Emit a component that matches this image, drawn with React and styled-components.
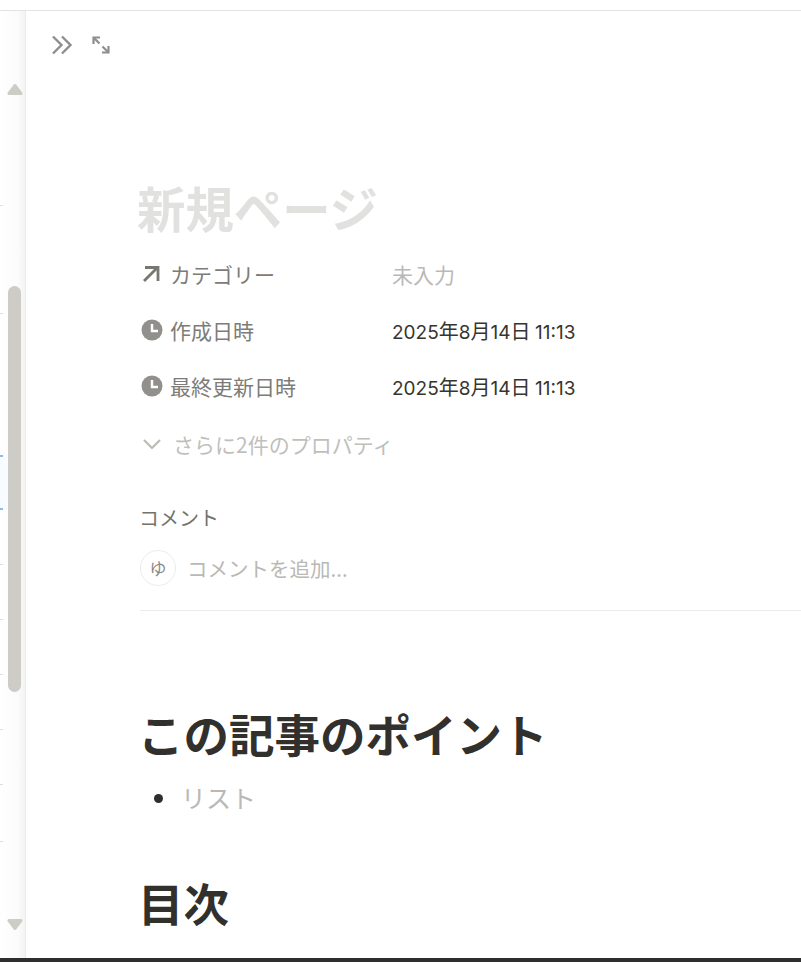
import React from "react";
import styled, { createGlobalStyle } from "styled-components";

const GlobalStyle = createGlobalStyle`
  html, body {
    margin: 0;
    padding: 0;
    background: #fff;
    overflow: hidden;
  }
`;

const FONT = `"Noto Sans CJK JP", "Liberation Sans", sans-serif`;

const Page = styled.div`
  width: 801px;
  height: 962px;
  display: flex;
  flex-direction: column;
  font-family: ${FONT};
  overflow: hidden;
`;

const TopLine = styled.div`
  height: 10px;
  flex: none;
  border-bottom: 1px solid #e3e3e3;
`;

const Body = styled.div`
  flex: 1;
  min-height: 0;
  display: flex;
`;

const BottomBar = styled.div`
  height: 4px;
  flex: none;
  background: #2e2e2e;
`;

const Rail = styled.div`
  position: relative;
  width: 26px;
  flex: none;
  background: linear-gradient(to right, #ffffff 0%, #fbfbfb 70%, #f3f3f3 96%, #e4e4e4 100%);
`;

const Tick = styled.span`
  position: absolute;
  left: 0;
  width: 3px;
  height: 1px;
  top: ${(p) => p.$y - 11}px;
  background: #dedede;
`;

const BlueBand = styled.div`
  position: absolute;
  left: 0;
  top: 444px;
  width: 8px;
  height: 55px;
  background: #f8fbff;

  &::before,
  &::after {
    content: "";
    position: absolute;
    left: 0;
    width: 3px;
    height: 2px;
    background: #8fbbe8;
  }

  &::before {
    top: 0;
  }

  &::after {
    bottom: 0;
  }
`;

const Thumb = styled.div`
  position: absolute;
  left: 8px;
  top: 275px;
  width: 13px;
  height: 406px;
  border-radius: 7px;
  background: #cdccc6;
`;

const ArrowUp = styled.svg`
  position: absolute;
  left: 7px;
  top: 72px;
`;

const ArrowDown = styled.svg`
  position: absolute;
  left: 7px;
  top: 907px;
`;

const Main = styled.div`
  flex: 1;
  min-width: 0;
  display: flex;
  flex-direction: column;
`;

const Toolbar = styled.div`
  height: 68px;
  display: flex;
  align-items: center;
  gap: 18px;
  padding-left: 25px;
  flex: none;
`;

const Content = styled.div`
  padding: 100px 0 0 114px;
`;

const Title = styled.h1`
  margin: 0 0 0 -3px;
  font-size: 48.4px;
  line-height: 56px;
  font-weight: 700;
  color: #e1e1df;
`;

const Props = styled.div`
  margin-top: 11px;
  display: flex;
  flex-direction: column;
`;

const PropRow = styled.div`
  height: 56px;
  display: flex;
  align-items: center;
  font-size: 21px;
`;

const PropName = styled.div`
  width: 251px;
  flex: none;
  display: flex;
  align-items: center;
  gap: 7px;
  padding-left: 1px;
  color: #7d7c78;
`;

const PropValue = styled.div`
  font-size: ${(p) => (p.$empty ? 21 : 20)}px;
  color: ${(p) => (p.$empty ? "#b9b9b5" : "#37352f")};
`;

const Num = styled.span`
  font-family: Inter, sans-serif;
  font-size: 19px;
`;

const MoreRow = styled.div`
  height: 59px;
  display: flex;
  align-items: center;
  gap: 11px;
  padding-left: 2px;
  font-size: 21px;
  color: #c0bfbc;
`;

const CommentHead = styled.div`
  margin-top: 29.5px;
  margin-left: -1px;
  font-size: 20px;
  line-height: 30px;
  color: #73726d;
`;

const CommentRow = styled.div`
  margin-top: 17px;
  padding-bottom: 24px;
  display: flex;
  align-items: center;
  gap: 11px;
  border-bottom: 1px solid #ebebea;
`;

const Avatar = styled.div`
  width: 34px;
  height: 34px;
  flex: none;
  border-radius: 50%;
  border: 1px solid #ececeb;
  display: flex;
  align-items: center;
  justify-content: center;
  font-size: 17px;
  color: #8a8985;
`;

const CommentInput = styled.div`
  font-size: 20.5px;
  color: #b9b9b5;
`;

const Heading = styled.h2`
  margin: ${(p) => p.$top}px 0 0 -2px;
  font-size: 45.5px;
  line-height: 60px;
  font-weight: 700;
  color: #32302c;
`;

const Bullet = styled.ul`
  margin: 15px 0 0;
  padding: 0 0 0 14px;
  list-style: none;
`;

const BulletItem = styled.li`
  display: flex;
  align-items: center;
  gap: 18px;
  font-size: 25px;
  line-height: 38px;
  color: #b9b9b5;

  &::before {
    content: "";
    width: 9px;
    height: 9px;
    margin-top: 4px;
    border-radius: 50%;
    background: #2f2e2a;
  }
`;

const ticks = [205, 313, 564, 619, 674, 729, 784, 841];

function ClockIcon() {
  return (
    <svg width="22" height="22" viewBox="0 0 22 22">
      <circle cx="11" cy="11" r="10.5" fill="#91908c" />
      <path d="M11 5v7h6" fill="none" stroke="#fff" strokeWidth="2.4" />
    </svg>
  );
}

function DateValue() {
  return (
    <PropValue>
      <Num>2025</Num>年<Num>8</Num>月<Num>14</Num>日 <Num>11:13</Num>
    </PropValue>
  );
}

export default function App() {
  return (
    <Page>
      <GlobalStyle />
      <TopLine />
      <Body>
        <Rail>
          {ticks.map((y) => (
            <Tick key={y} $y={y} />
          ))}
          <BlueBand />
          <ArrowUp width="16" height="14" viewBox="0 0 16 14">
            <path d="M8 2.5 14 10.5H2Z" fill="#cdccc6" stroke="#cdccc6" strokeWidth="3" strokeLinejoin="round" />
          </ArrowUp>
          <ArrowDown width="16" height="14" viewBox="0 0 16 14">
            <path d="M2 2.5H14L8 10.5Z" fill="#cdccc6" stroke="#cdccc6" strokeWidth="3" strokeLinejoin="round" />
          </ArrowDown>
          <Thumb />
        </Rail>
        <Main>
          <Toolbar>
            <svg width="22" height="20" viewBox="0 0 22 20" fill="none" stroke="#8e8e8a" strokeWidth="2.4">
              <path d="M2 1.5 10.5 10 2 18.5" />
              <path d="M11 1.5 19.5 10 11 18.5" />
            </svg>
            <svg width="20" height="20" viewBox="0 0 20 20" fill="none" stroke="#8e8e8a" strokeWidth="2.2">
              <path d="M3 3 8.5 8.5" />
              <path d="M11.5 11.5 17 17" />
              <path d="M2.5 9V2.5H9" />
              <path d="M17.5 11V17.5H11" />
            </svg>
          </Toolbar>
          <Content>
            <Title>新規ページ</Title>
            <Props>
              <PropRow>
                <PropName>
                  <svg width="22" height="22" viewBox="0 0 22 22" fill="none" stroke="#787774" strokeWidth="2.8">
                    <path d="M3 18 16 5" />
                    <path d="M4 4.5H17V18" />
                  </svg>
                  カテゴリー
                </PropName>
                <PropValue $empty>未入力</PropValue>
              </PropRow>
              <PropRow>
                <PropName>
                  <ClockIcon />
                  作成日時
                </PropName>
                <DateValue />
              </PropRow>
              <PropRow>
                <PropName>
                  <ClockIcon />
                  最終更新日時
                </PropName>
                <DateValue />
              </PropRow>
              <MoreRow>
                <svg width="20" height="20" viewBox="0 0 20 20" fill="none" stroke="#bcbbb8" strokeWidth="2.2">
                  <path d="M2 6 10 14 18 6" />
                </svg>
                さらに2件のプロパティ
              </MoreRow>
            </Props>
            <CommentHead>コメント</CommentHead>
            <CommentRow>
              <Avatar>ゆ</Avatar>
              <CommentInput>コメントを追加...</CommentInput>
            </CommentRow>
            <Heading $top={92}>この記事のポイント</Heading>
            <Bullet>
              <BulletItem>リスト</BulletItem>
            </Bullet>
            <Heading $top={56}>目次</Heading>
          </Content>
        </Main>
      </Body>
      <BottomBar />
    </Page>
  );
}
